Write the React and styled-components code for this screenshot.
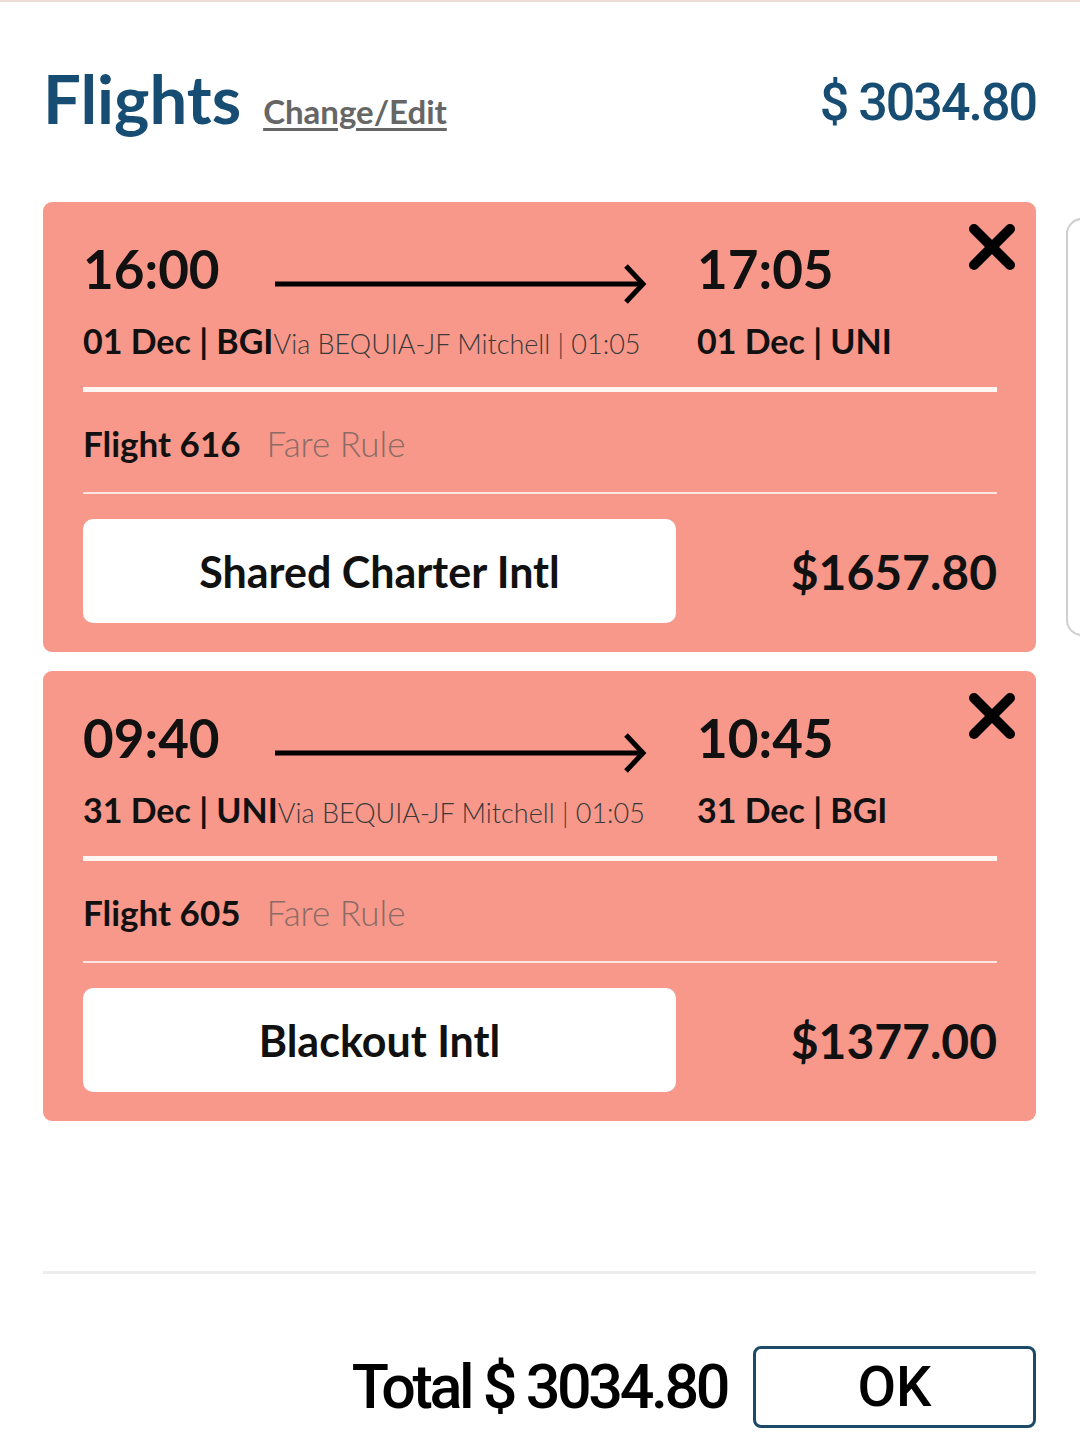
import React from 'react';
import styled, { createGlobalStyle } from 'styled-components';

const GlobalStyle = createGlobalStyle`
  html, body {
    margin: 0;
    padding: 0;
    background: #ffffff;
  }
  body {
    font-family: Lato, "Open Sans", sans-serif;
    color: #111;
  }
`;

const flights = [
  {
    depTime: '16:00',
    depInfo: '01 Dec | BGI',
    via: 'Via BEQUIA-JF Mitchell | 01:05',
    arrTime: '17:05',
    arrInfo: '01 Dec | UNI',
    number: 'Flight 616',
    fare: 'Shared Charter Intl',
    price: '$1657.80',
  },
  {
    depTime: '09:40',
    depInfo: '31 Dec | UNI',
    via: 'Via BEQUIA-JF Mitchell | 01:05',
    arrTime: '10:45',
    arrInfo: '31 Dec | BGI',
    number: 'Flight 605',
    fare: 'Blackout Intl',
    price: '$1377.00',
  },
];

function Arrow() {
  return (
    <ArrowSvg width="372" height="40" viewBox="0 0 372 40">
      <line x1="0" y1="20" x2="366" y2="20" stroke="#000" strokeWidth="5" />
      <polyline points="351,2 368,20 351,38" fill="none" stroke="#000" strokeWidth="5" />
    </ArrowSvg>
  );
}

function CloseIcon() {
  return (
    <svg width="50" height="50" viewBox="0 0 50 50">
      <line x1="7" y1="7" x2="43" y2="43" stroke="#000" strokeWidth="10" strokeLinecap="round" />
      <line x1="43" y1="7" x2="7" y2="43" stroke="#000" strokeWidth="10" strokeLinecap="round" />
    </svg>
  );
}

function FlightCard({ f }) {
  return (
    <Card>
      <CloseButton>
        <CloseIcon />
      </CloseButton>
      <Route>
        <TimeLine>
          <Time>{f.depTime}</Time>
          <Arrow />
        </TimeLine>
        <Time>{f.arrTime}</Time>
        <Info>
          {f.depInfo}
          <Via>{f.via}</Via>
        </Info>
        <Info>{f.arrInfo}</Info>
      </Route>
      <ThickRule />
      <FlightRow>
        <FlightNo>{f.number}</FlightNo>
        <FareRule>Fare Rule</FareRule>
      </FlightRow>
      <ThinRule />
      <FareRow>
        <FareBox>{f.fare}</FareBox>
        <Price>{f.price}</Price>
      </FareRow>
    </Card>
  );
}

export default function App() {
  return (
    <Page>
      <GlobalStyle />
      <Header>
        <TitleGroup>
          <Title>Flights</Title>
          <EditLink>Change/Edit</EditLink>
        </TitleGroup>
        <HeaderPrice>$ 3034.80</HeaderPrice>
      </Header>
      <CardList>
        <PeekRow>
          <FlightCard f={flights[0]} />
          <Peek />
        </PeekRow>
        <FlightCard f={flights[1]} />
      </CardList>
      <Divider />
      <Footer>
        <Total>Total $ 3034.80</Total>
        <OkButton>OK</OkButton>
      </Footer>
    </Page>
  );
}

const Page = styled.div`
  width: 1080px;
  height: 1440px;
  box-sizing: border-box;
  overflow: hidden;
  border-top: 2px solid #eddcd6;
  padding: 0 44px 0 43px;
`;

const Header = styled.div`
  display: flex;
  align-items: baseline;
  justify-content: space-between;
  margin-top: 63px;
`;

const TitleGroup = styled.div`
  display: flex;
  align-items: baseline;
  gap: 22px;
`;

const Title = styled.h1`
  margin: 0;
  font-family: Lato, sans-serif;
  font-size: 67px;
  line-height: 1;
  font-weight: 700;
  color: #174d72;
`;

const EditLink = styled.a`
  font-family: Lato, sans-serif;
  font-size: 33px;
  font-weight: 700;
  color: #666666;
  text-decoration: underline;
  text-decoration-thickness: 3px;
  text-underline-offset: 4px;
`;

const HeaderPrice = styled.div`
  font-family: Roboto, sans-serif;
  font-size: 52px;
  font-weight: 500;
  letter-spacing: -2px;
  color: #174d72;
  transform: translateY(-4px);
`;

const CardList = styled.div`
  display: flex;
  flex-direction: column;
  gap: 19px;
  margin-top: 65px;
`;

const PeekRow = styled.div`
  display: flex;
  align-items: center;
  gap: 30px;
`;

const Peek = styled.div`
  flex: 0 0 300px;
  height: 414px;
  border: 2px solid #cfcfcf;
  border-radius: 16px;
`;

const Card = styled.div`
  position: relative;
  flex-shrink: 0;
  width: 993px;
  box-sizing: border-box;
  background: #f7988a;
  border-radius: 9px;
  padding: 40px 39px 29px 40px;
`;

const CloseButton = styled.div`
  position: absolute;
  top: 20px;
  right: 19px;
  width: 50px;
  height: 50px;
`;

const Route = styled.div`
  display: grid;
  grid-template-columns: 614px 1fr;
  row-gap: 20px;
`;

const TimeLine = styled.div`
  display: flex;
  align-items: flex-start;
`;

const ArrowSvg = styled.svg`
  margin-left: 56px;
  margin-top: 22px;
  flex: none;
`;

const Time = styled.div`
  width: 136px;
  font-size: 53px;
  line-height: 1;
  font-weight: 700;
  color: #111;
`;

const Info = styled.div`
  font-size: 34px;
  line-height: 1;
  font-weight: 700;
  color: #111;
  white-space: nowrap;
`;

const Via = styled.span`
  font-size: 27px;
  font-weight: 300;
  color: #3a3a3a;
`;

const ThickRule = styled.div`
  height: 5px;
  background: #fff6f4;
  margin-top: 29px;
`;

const FlightRow = styled.div`
  display: flex;
  align-items: baseline;
  gap: 26px;
  margin-top: 34px;
`;

const FlightNo = styled.div`
  font-size: 35px;
  line-height: 1;
  font-weight: 700;
  color: #111;
`;

const FareRule = styled.div`
  font-size: 35px;
  line-height: 1;
  font-weight: 300;
  color: #8a6b65;
`;

const ThinRule = styled.div`
  height: 2px;
  background: #fde6e2;
  margin-top: 31px;
`;

const FareRow = styled.div`
  display: flex;
  align-items: center;
  justify-content: space-between;
  margin-top: 25px;
`;

const FareBox = styled.div`
  width: 593px;
  height: 104px;
  display: flex;
  align-items: center;
  justify-content: center;
  background: #ffffff;
  border-radius: 10px;
  font-size: 43px;
  font-weight: 700;
  color: #111;
`;

const Price = styled.div`
  font-size: 48px;
  font-weight: 700;
  color: #111;
`;

const Divider = styled.div`
  height: 3px;
  background: #ededed;
  margin-top: 150px;
`;

const Footer = styled.div`
  display: flex;
  align-items: center;
  justify-content: flex-end;
  gap: 26px;
  margin-top: 72px;
`;

const Total = styled.div`
  font-family: Roboto, sans-serif;
  font-size: 61px;
  font-weight: 500;
  letter-spacing: -3.4px;
  color: #000;
`;

const OkButton = styled.button`
  width: 283px;
  height: 82px;
  box-sizing: border-box;
  background: #ffffff;
  border: 3px solid #1d4a67;
  border-radius: 8px;
  font-family: Roboto, sans-serif;
  font-size: 56px;
  font-weight: 500;
  color: #000;
  padding: 0;
`;
